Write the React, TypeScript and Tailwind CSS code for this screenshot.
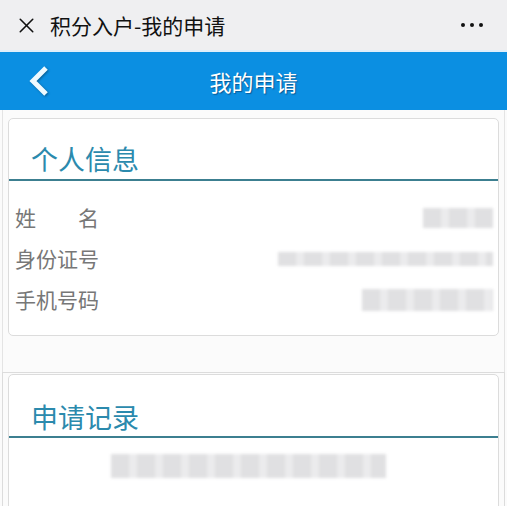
import { X } from "lucide-react";

const Blur = ({ w, h = 18 }: { w: number; h?: number }) => (
  <div className="flex items-center blur-[1.5px]" style={{ width: w, height: h }}>
    <div className="h-full w-full bg-[repeating-linear-gradient(90deg,#d8d8da_0px,#d8d8da_18px,#e6e6e8_18px,#e6e6e8_26px)] opacity-80" />
  </div>
);

const rows = [
  { label: "姓\u3000\u3000名", w: 70, h: 20 },
  { label: "身份证号", w: 215, h: 14 },
  { label: "手机号码", w: 131, h: 22 },
];

const App = () => {
  return (
    <div className="w-[507px] h-[506px] overflow-hidden bg-[#fbfbfb] font-['Noto_Sans_CJK_SC',sans-serif]">
      {/* 微信顶栏 */}
      <div className="h-[52px] bg-[#efeff1] border-b-2 border-[#dfeefa] flex items-center pl-[14px] pr-[24px]">
        <X size={25} strokeWidth={1.5} className="text-[#111]" />
        <span className="ml-[11px] text-[21px] leading-none text-[#111]">积分入户-我的申请</span>
        <div className="ml-auto flex gap-[5px]">
          <span className="w-[4px] h-[4px] rounded-full bg-[#111]" />
          <span className="w-[4px] h-[4px] rounded-full bg-[#111]" />
          <span className="w-[4px] h-[4px] rounded-full bg-[#111]" />
        </div>
      </div>

      {/* 蓝色标题栏 */}
      <div className="h-[58px] bg-[#0b8fe2] flex items-center relative">
        <svg width="24" height="30" viewBox="0 0 24 30" className="ml-[27px] drop-shadow-[1px_1px_1px_rgba(0,0,0,0.35)]">
          <path d="M19 2 L6 15 L19 28" fill="none" stroke="#eefaff" strokeWidth="5" strokeLinejoin="miter" />
        </svg>
        <span className="absolute left-0 right-0 text-center text-[22px] text-white [text-shadow:1px_1px_1px_rgba(0,40,80,0.5)]">
          我的申请
        </span>
      </div>

      {/* 个人信息 */}
      <div className="mx-[2px] border-x border-[#e4e4e4] pl-[5px] pr-[5px] pt-[8px] pb-[36px]">
        <div className="border border-[#dcdcdc] rounded-[5px] bg-white pb-[15px]">
          <div className="pl-[22px] pt-[24px] pb-[4px] border-b-2 border-[#3c7f90]">
            <div className="text-[27px] leading-[32px] text-[#2b8aad]">个人信息</div>
          </div>
          <div className="mt-[16px]">
            {rows.map((r) => (
              <div key={r.label} className="h-[41px] flex items-center justify-between pl-[6px] pr-[5px]">
                <span className="text-[21px] text-[#777777]">{r.label}</span>
                <Blur w={r.w} h={r.h} />
              </div>
            ))}
          </div>
        </div>
      </div>

      {/* 申请记录 */}
      <div className="mx-[2px] border-x border-t border-[#dcdcdc] pl-[5px] pr-[5px] pt-[1px] h-[200px]">
        <div className="border border-[#dcdcdc] rounded-[5px] bg-white h-full">
          <div className="pl-[22px] pt-[26px] pb-[3px] border-b-2 border-[#3c7f90]">
            <div className="text-[27px] leading-[32px] text-[#2b8aad]">申请记录</div>
          </div>
          <div className="mt-[16px] pl-[102px]">
            <Blur w={275} h={24} />
          </div>
        </div>
      </div>
    </div>
  );
};

export default App;
